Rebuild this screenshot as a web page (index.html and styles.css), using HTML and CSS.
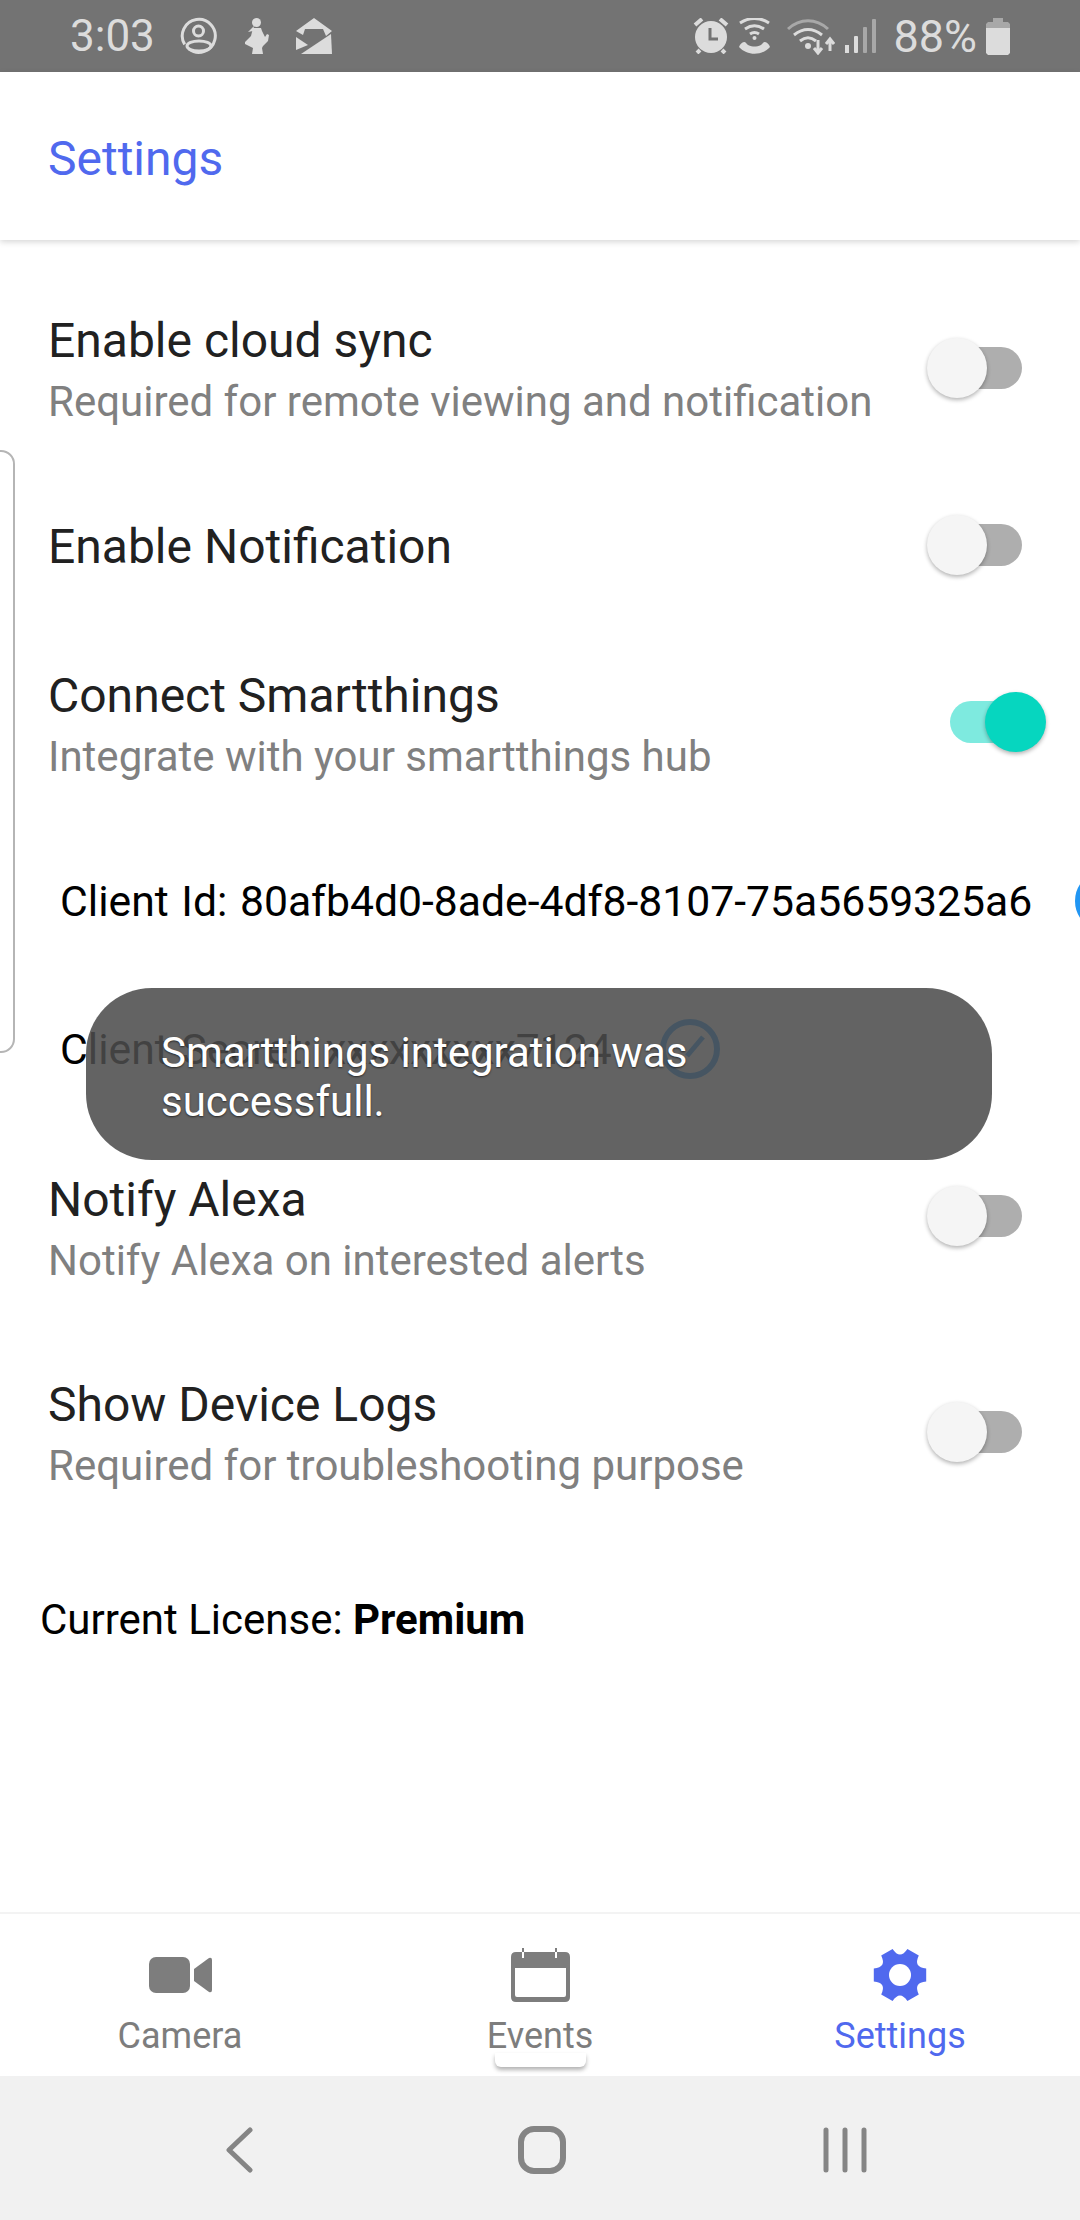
FILE: index.html
```html
<!DOCTYPE html>
<html>
  <head>
    <title>Settings</title>
    <link rel="stylesheet" href="styles.css">
  </head>
  <body>
    <div id="screen">
      <div class="status-bar">
        <div class="status-left">
          <span class="status-text time">3:03</span>
          <svg class="s-icon" width="38" height="38" viewBox="0 0 38 38"><path d="M4.7 27.4A16.5 16.5 0 1 1 9 32.1" fill="none" stroke="#dcdcdc" stroke-width="3"/><circle cx="18.500" cy="14" r="5" fill="none" stroke="#dcdcdc" stroke-width="3"/><ellipse cx="19" cy="29" rx="12" ry="5" fill="none" stroke="#dcdcdc" stroke-width="3"/></svg>
          <svg class="s-icon" width="28" height="36" viewBox="0 0 28 36"><circle cx="13.500" cy="4.500" r="4.500" fill="#dcdcdc"/><path d="M11 8l-6 6l5-1z" fill="#dcdcdc"/><path d="M10 10h8l1 3l3 6l2-3l2 1l-1 6l-5 5l-1 2l1 6h-11l1-6l-8-4v-2l6-6z" fill="#dcdcdc"/></svg>
          <svg class="s-icon" width="36" height="36" viewBox="0 0 36 36"><path d="M18 0l18 13l-6 5l-3-7h-18l-2 6l-7-4z" fill="#dcdcdc"/><path d="M0 19l12 8l-12 5z" fill="#dcdcdc"/><path d="M35 16l1 20h-31z" fill="#dcdcdc"/></svg>
        </div>
        <div class="status-right">
          <svg class="i-alarm" width="38" height="36" viewBox="0 0 38 36"><circle cx="19" cy="19" r="16" fill="#dcdcdc"/><path d="M18 10v11h8" fill="none" stroke="#737373" stroke-width="3"/><path d="M3 7l7-6M35 7l-7-6M5 35l3-3M33 35l-3-3" stroke="#dcdcdc" stroke-width="4"/></svg>
          <svg class="i-call" width="31" height="36" viewBox="0 0 31 36"><path d="M1 5c9-6 20-6 29 0M6 11c6-4 13-4 19 0M11 16c3-2 6-2 9 0" fill="none" stroke="#dcdcdc" stroke-width="3"/><circle cx="15.500" cy="20" r="2" fill="#dcdcdc"/><path d="M0 29c1-3 3-5 6-5l3 3c5 2 8 2 13 0l3-3c3 0 5 2 6 5c-8 9-23 9-31 0z" fill="#dcdcdc"/></svg>
          <svg class="i-wifi" width="48" height="37" viewBox="0 0 48 37"><path d="M1 11c12-11 28-11 40 0" fill="none" stroke="#a8a8a8" stroke-width="3"/><path d="M7 17c9-7 19-7 28 0M13 23c5-4 11-4 16 0" fill="none" stroke="#dcdcdc" stroke-width="3"/><circle cx="21" cy="28" r="3" fill="#dcdcdc"/><path d="M31 22v13M27 30l4 5l4-5M43 33v-10M39 26l4-5l4 5" fill="none" stroke="#dcdcdc" stroke-width="3"/></svg>
          <svg class="i-signal" width="31" height="36" viewBox="0 0 31 36"><rect x="0" y="27" width="4" height="8" fill="#dcdcdc"/><rect x="9" y="18" width="4" height="17" rx="1" fill="#dcdcdc"/><rect x="18" y="9" width="4" height="26" rx="1" fill="#a8a8a8"/><rect x="27" y="1" width="4" height="34" rx="1" fill="#a8a8a8"/></svg>
          <span class="status-text pct">88%</span>
          <svg class="i-batt" width="24" height="37" viewBox="0 0 24 37"><path d="M7 0h10v4h-10z" fill="#a8a8a8"/><path d="M2 4h20l2 2v4h-24v-4z" fill="#a8a8a8"/><path d="M0 10h24v25l-2 2h-20l-2-2z" fill="#dcdcdc"/></svg>
        </div>
      </div>

      <div class="header"><span>Settings</span></div>

      <div class="content">
        <div class="setting row-cloud">
          <div><div class="title">Enable cloud sync</div><div class="sub">Required for remote viewing and notification</div></div>
          <div class="switch"><i class="track"></i><i class="knob"></i></div>
        </div>
        <div class="setting row-notif">
          <div><div class="title">Enable Notification</div></div>
          <div class="switch"><i class="track"></i><i class="knob"></i></div>
        </div>
        <div class="setting row-smart">
          <div><div class="title">Connect Smartthings</div><div class="sub">Integrate with your smartthings hub</div></div>
          <div class="switch on"><i class="track"></i><i class="knob"></i></div>
        </div>
        <div class="cred cred-id">
          <span>Client Id: 80afb4d0-8ade-4df8-8107-75a5659325a6</span>
          <svg class="edit" width="60" height="60" viewBox="0 0 60 60"><circle cx="30" cy="30" r="27" fill="none" stroke="#2196f3" stroke-width="6"/><path d="M27 37l16-19" stroke="#2196f3" stroke-width="5"/></svg>
        </div>
        <div class="cred cred-secret">
          <span>Client Secret: xxxxxxxxx7124</span>
          <svg class="edit" width="60" height="60" viewBox="0 0 60 60"><circle cx="30" cy="30" r="27" fill="none" stroke="#2196f3" stroke-width="6"/><path d="M27 37l16-19" stroke="#2196f3" stroke-width="5"/></svg>
        </div>
        <div class="setting row-alexa">
          <div><div class="title">Notify Alexa</div><div class="sub">Notify Alexa on interested alerts</div></div>
          <div class="switch"><i class="track"></i><i class="knob"></i></div>
        </div>
        <div class="setting row-logs">
          <div><div class="title">Show Device Logs</div><div class="sub">Required for troubleshooting purpose</div></div>
          <div class="switch"><i class="track"></i><i class="knob"></i></div>
        </div>
        <div class="license">Current License: <b>Premium</b></div>
      </div>

      <div class="tabs">
        <div class="tab">
          <svg width="63" height="54" viewBox="0 0 63 54"><rect x="0" y="9" width="41" height="36" rx="7" fill="#7d7d7d"/><path d="M45 21l15-11q3-1 3 2v30q0 3-3 2l-15-11z" fill="#7d7d7d"/></svg>
          <span>Camera</span>
        </div>
        <div class="tab">
          <svg width="59" height="54" viewBox="0 0 59 54"><path d="M5 4h49q5 0 5 5v40q0 5-5 5h-49q-5 0-5-5v-40q0-5 5-5zM4 20v27q0 2 2 2h47q2 0 2-2v-27z" fill="#7d7d7d" fill-rule="evenodd"/><path d="M12 4v6M45 4v6" stroke="#fff" stroke-width="2"/><path d="M12 0v4M45 0v4" stroke="#7d7d7d" stroke-width="2"/></svg>
          <span>Events</span>
          <i class="tab-mark"></i>
        </div>
        <div class="tab active">
          <svg width="54" height="54" viewBox="0 0 54 54"><path d="M19.600 1Q27 12 34.400 1L45.800 7.600Q40 19.500 53.200 20.500V33.500Q40 34.500 45.800 46.400L34.400 53Q27 42 19.600 53L8.200 46.400Q14 34.500.8 33.500V20.500Q14 19.500 8.200 7.600z" fill="#5069ee"/><circle cx="27" cy="27" r="11" fill="#fff"/></svg>
          <span>Settings</span>
        </div>
      </div>

      <div class="nav-bar">
        <svg class="nav-back" width="30" height="46" viewBox="0 0 30 46"><path d="M27 3l-21 20l21 20" fill="none" stroke="#858585" stroke-width="5" stroke-linecap="round" stroke-linejoin="round"/></svg>
        <svg class="nav-home" width="48" height="48" viewBox="0 0 48 48"><rect x="3" y="3" width="42" height="42" rx="13" fill="none" stroke="#858585" stroke-width="6"/></svg>
        <svg class="nav-recent" width="44" height="46" viewBox="0 0 44 46"><path d="M3 3v40M22 3v40M41 3v40" stroke="#858585" stroke-width="5" stroke-linecap="round"/></svg>
      </div>

      <i class="edge-frame"></i>
      <div class="toast">Smartthings integration was successfull.</div>
    </div>
  </body>
</html>
```

FILE: styles.css
```css
* {
  box-sizing: border-box;
}

body {
  margin: 0;
  font-family: Roboto, sans-serif;
  background: #fff;
}

#screen {
  position: relative;
  width: 1080px;
  height: 2220px;
  overflow: hidden;
  display: flex;
  flex-direction: column;
}

.status-bar {
  height: 72px;
  flex: none;
  background: #737373;
  display: flex;
  align-items: center;
  justify-content: space-between;
  padding: 0 70px 0 70px;
}

.status-left,
.status-right {
  display: flex;
  align-items: center;
}

.status-left svg {
  margin-left: 25px;
}

.i-call {
  margin-left: 9px;
}

.i-wifi {
  margin-left: 17px;
}

.i-signal {
  margin-left: 10px;
}

.i-batt {
  margin-left: 9px;
}

.status-text {
  color: #dcdcdc;
  font-size: 45px;
}

.time {
  font-size: 44px;
}

.pct {
  margin-left: 17px;
}

.header {
  height: 168px;
  flex: none;
  padding: 4px 0 0 48px;
  display: flex;
  align-items: center;
  font-size: 48px;
  color: #5069ee;
  box-shadow: 0 2px 6px rgba(0, 0, 0, 0.16);
  position: relative;
}

.content {
  flex: 1;
  display: flex;
  flex-direction: column;
  color: #212121;
}

.setting {
  display: flex;
  align-items: center;
  justify-content: space-between;
  padding-left: 48px;
}

.title {
  font-size: 48px;
  line-height: 60px;
}

.sub {
  font-size: 42px;
  line-height: 62px;
  color: #808080;
}

.row-cloud {
  margin-top: 71px;
  height: 122px;
}

.row-cloud .switch {
  margin-bottom: 8px;
}

.row-notif {
  margin-top: 84px;
  height: 60px;
}

.row-notif .switch {
  margin-bottom: 4px;
}

.row-smart {
  margin-top: 89px;
  height: 122px;
}

.row-smart .switch {
  margin-bottom: 10px;
}

.row-alexa {
  height: 122px;
}

.row-alexa .switch {
  margin-bottom: 30px;
}

.row-logs {
  margin-top: 83px;
  height: 122px;
}

.row-logs .switch {
  margin-bottom: 8px;
}

.switch {
  position: relative;
  flex: none;
  width: 95px;
  height: 60px;
  margin-right: 58px;
}

.track {
  position: absolute;
  left: 18px;
  top: 9px;
  width: 77px;
  height: 42px;
  border-radius: 21px;
  background: #aeaeae;
}

.knob {
  position: absolute;
  left: 0;
  top: 0;
  width: 60px;
  height: 60px;
  border-radius: 50%;
  background: #f5f5f5;
  box-shadow: 0 2px 4px rgba(0, 0, 0, 0.3);
}

.switch.on {
  width: 96px;
  margin-right: 34px;
}

.switch.on .track {
  background: #7eeadf;
  left: 0;
  width: 78px;
}

.switch.on .knob {
  left: 35px;
  width: 61px;
  background: #06d6bf;
}

.cred {
  display: flex;
  align-items: center;
  padding-left: 60px;
  font-size: 42.7px;
  word-spacing: 2px;
  color: #000;
  white-space: nowrap;
}

.cred-id {
  margin-top: 83px;
  height: 60px;
}

.cred-id .edit {
  margin-left: 43px;
}

.cred-secret {
  margin-top: 88px;
  height: 60px;
  margin-bottom: 91px;
}

.cred-secret .edit {
  margin-left: 48px;
}

.edit {
  flex: none;
}

.license {
  margin-top: 93px;
  padding-left: 40px;
  font-size: 42px;
  line-height: 60px;
  color: #000;
}

.tabs {
  height: 164px;
  flex: none;
  display: flex;
  border-top: 2px solid #f3f3f3;
}

.tab {
  position: relative;
  flex: 1;
  display: flex;
  flex-direction: column;
  align-items: center;
  justify-content: flex-end;
  padding-bottom: 19px;
  font-size: 36px;
  color: #7d7d7d;
  gap: 13px;
}

.tab.active {
  color: #5069ee;
}

.tab-mark {
  position: absolute;
  bottom: 9px;
  left: 50%;
  width: 91px;
  height: 14px;
  margin-left: -45px;
  border-radius: 0 0 6px 6px;
  background: #fff;
  box-shadow: 0 3px 4px rgba(0, 0, 0, 0.3);
}

.nav-bar {
  height: 144px;
  flex: none;
  background: #f1f1f1;
  display: flex;
  align-items: center;
  padding: 4px 0 0 223px;
}

.nav-home {
  margin-left: 265px;
}

.nav-recent {
  margin-left: 257px;
}

.edge-frame {
  position: absolute;
  left: -20px;
  top: 450px;
  width: 35px;
  height: 603px;
  border: 2px solid #b5b5b5;
  border-radius: 14px;
}

.toast {
  position: absolute;
  left: 86px;
  top: 988px;
  width: 906px;
  height: 172px;
  padding: 40px 250px 0 75px;
  border-radius: 66px;
  background: rgba(76, 76, 76, 0.87);
  color: #fff;
  font-size: 42px;
  line-height: 49px;
  text-shadow: 0 1px 2px rgba(0, 0, 0, 0.6);
}
```
